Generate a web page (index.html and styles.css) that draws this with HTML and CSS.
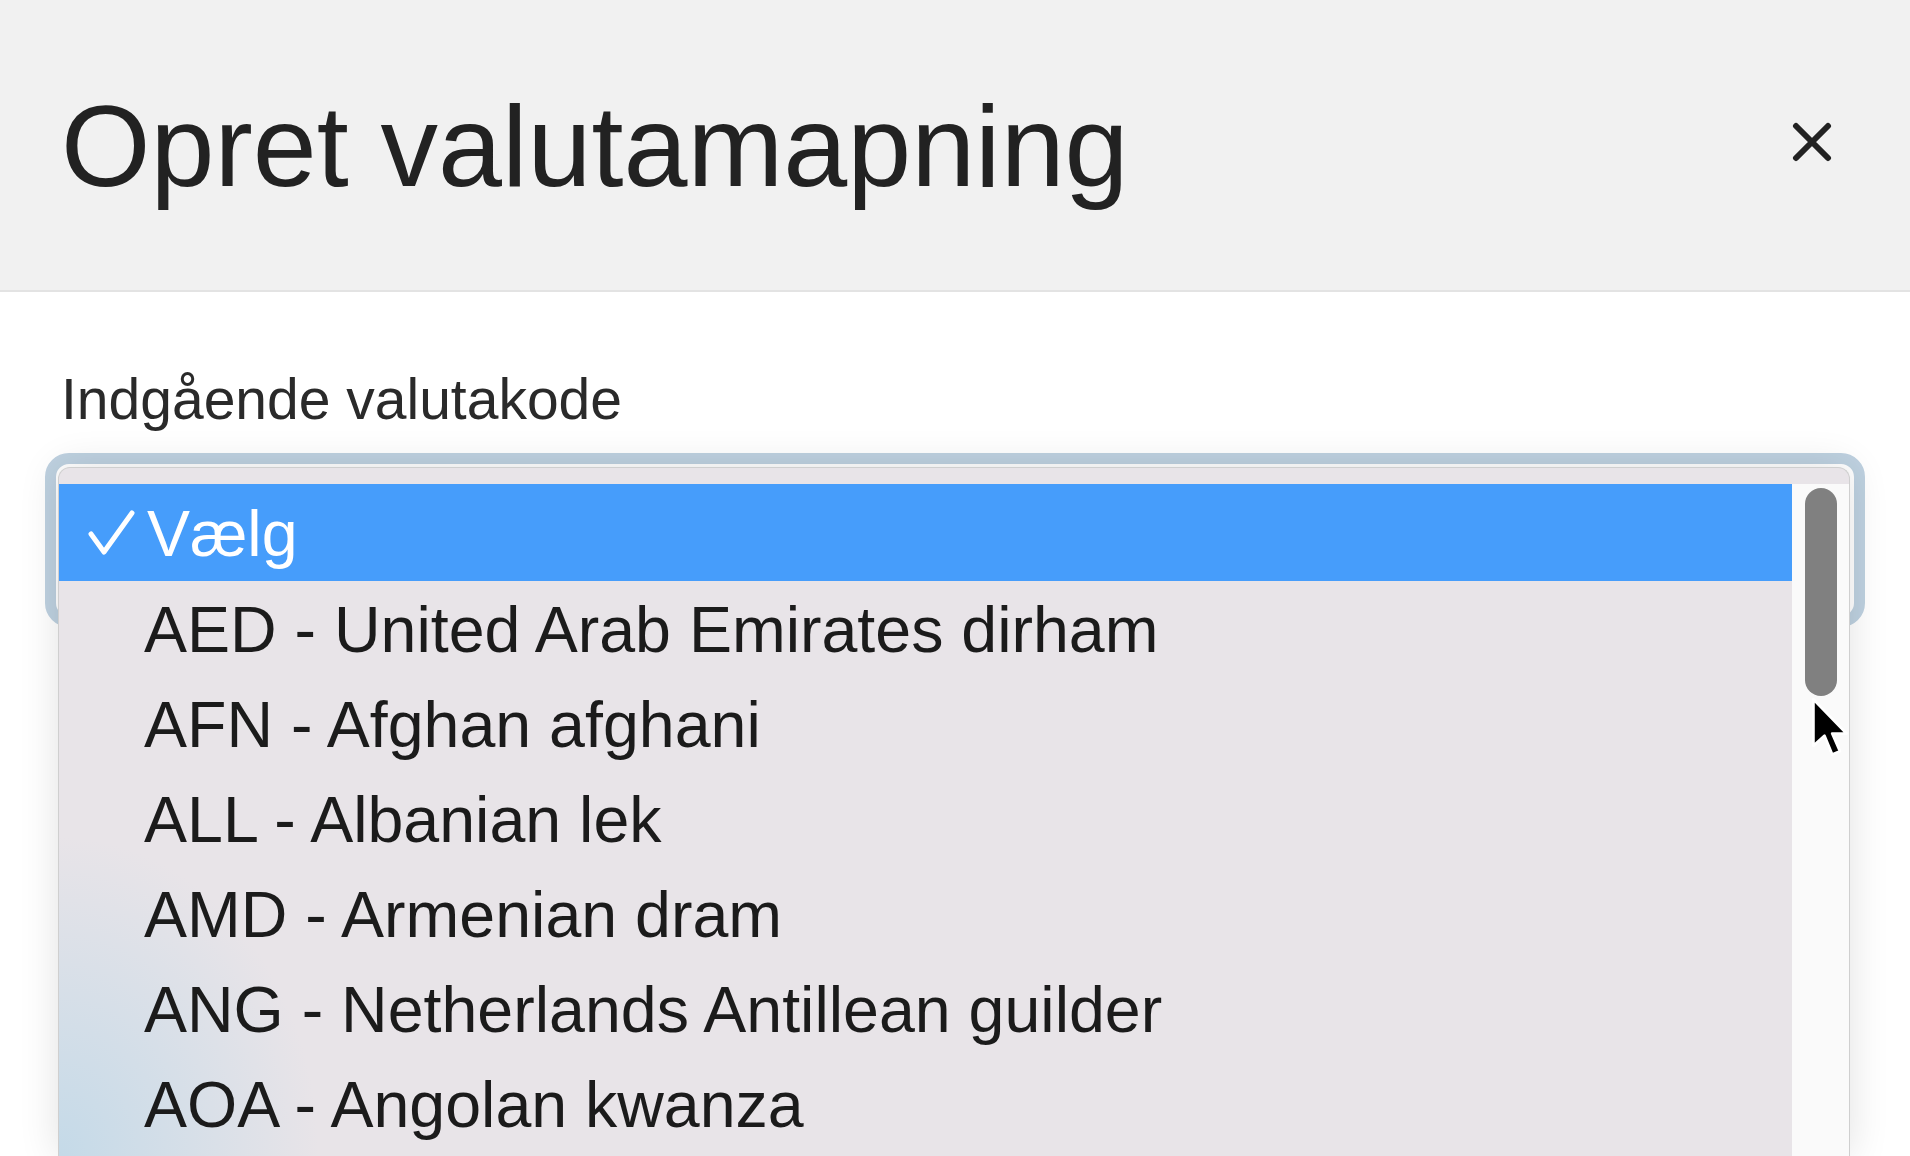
FILE: index.html
```html
<!DOCTYPE html>
<html lang="da">
<head>
    <meta charset="UTF-8">
    <meta name="viewport" content="width=device-width, initial-scale=1.0">
    <title>Opret valutamapning</title>
    <link rel="stylesheet" href="styles.css">
</head>
<body>
    <div class="modal">
        <header class="modal-header">
            <h1 class="modal-title">Opret valutamapning</h1>
            <button class="modal-close" type="button" aria-label="Luk">
                <svg width="40" height="40" viewBox="0 0 40 40">
                    <path d="M4 4 L36 36 M36 4 L4 36" stroke="#222" stroke-width="6" stroke-linecap="round"/>
                </svg>
            </button>
        </header>

        <div class="modal-body">
            <label class="field-label">Indgående valutakode</label>
            <div class="select-wrap">
                <div class="select-ring"></div>

                <!-- den åbne rullemenu ligger over feltet -->
                <div class="select-menu">
                    <div class="menu-inner">
                        <ul class="menu-list">
                            <li class="menu-item selected">
                                <svg class="check" width="48" height="48" viewBox="0 0 48 48">
                                    <polyline points="3,24 16,42 44,3" fill="none" stroke="#fff" stroke-width="5" stroke-linecap="round" stroke-linejoin="round"/>
                                </svg>
                                <span>Vælg</span>
                            </li>
                            <li class="menu-item">AED - United Arab Emirates dirham</li>
                            <li class="menu-item">AFN - Afghan afghani</li>
                            <li class="menu-item">ALL - Albanian lek</li>
                            <li class="menu-item">AMD - Armenian dram</li>
                            <li class="menu-item">ANG - Netherlands Antillean guilder</li>
                            <li class="menu-item">AOA - Angolan kwanza</li>
                        </ul>
                        <div class="menu-scroll">
                            <div class="scroll-thumb"></div>
                        </div>
                    </div>
                </div>
            </div>
        </div>
    </div>

    <svg class="cursor" width="38" height="62" viewBox="0 0 34 56">
        <polygon points="2,2 2,44 12,35 19,52 26,49 19,33 32,33" fill="#000" stroke="#fff" stroke-width="2.5" stroke-linejoin="round"/>
    </svg>
</body>
</html>
```

FILE: styles.css
```css
/* Dialog med åben rullemenu */
html, body {
    margin: 0;
    padding: 0;
    height: 100%;
    overflow: hidden;
}
body {
    font-family: 'Liberation Sans', Arial, sans-serif;
    background: #fff;
    color: #222;
    position: relative;
}
.modal-header {
    height: 290px;
    background-color: #f1f1f1;
    border-bottom: 2px solid #e3e3e3;
    display: flex;
    align-items: center;
    justify-content: space-between;
    padding: 0 78px 0 61px;
}
.modal-title {
    margin: 2px 0 0;
    font-size: 115px;
    font-weight: 400;
    line-height: 1;
    color: #222;
}
.modal-close {
    background: none;
    border: none;
    padding: 0;
    margin-bottom: 6px;
    display: flex;
    cursor: pointer;
}
.modal-body {
    padding: 74px 0 0 61px;
}
.field-label {
    display: block;
    font-size: 57px;
    line-height: 66px;
    color: #2a2a2a;
}
.select-wrap {
    position: relative;
    margin: 21px 0 0 -16px;
    width: 1820px;
}
.select-ring {
    height: 174px;
    box-sizing: border-box;
    border: 11px solid #bed1e0;
    border-radius: 24px;
    background: #fff;
}
.select-menu {
    position: absolute;
    left: 13px;
    top: 14px;
    width: 1792px;
    height: 690px;
    box-sizing: border-box;
    padding-top: 16px;
    border: 1px solid #cfcfcf;
    border-bottom: none;
    border-radius: 12px 12px 0 0;
    background:
        radial-gradient(ellipse 260px 320px at 0% 100%, rgba(190, 216, 232, 0.85), rgba(190, 216, 232, 0) 100%),
        #e8e4e8;
    box-shadow: 0 0 40px rgba(0, 0, 0, 0.12);
}
.menu-inner {
    display: flex;
    height: 100%;
}
.menu-list {
    list-style: none;
    margin: 0;
    padding: 0;
    flex: 1;
}
.menu-item {
    height: 95px;
    display: flex;
    align-items: center;
    padding: 3px 0 0 85px;
    box-sizing: border-box;
    font-size: 64.5px;
    color: #1b1b1b;
    white-space: nowrap;
}
.menu-item.selected {
    height: 97px;
    padding-left: 29px;
    background-color: #469dfb;
    color: #fff;
}
.menu-item .check {
    margin: 0 11px 0 0;
}
.menu-scroll {
    width: 57px;
    background: #fafafa;
    padding: 4px 0 0 13px;
    box-sizing: border-box;
}
.scroll-thumb {
    width: 32px;
    height: 208px;
    border-radius: 16px;
    background: #808080;
}
.cursor {
    position: absolute;
    left: 1811px;
    top: 697px;
}
```
